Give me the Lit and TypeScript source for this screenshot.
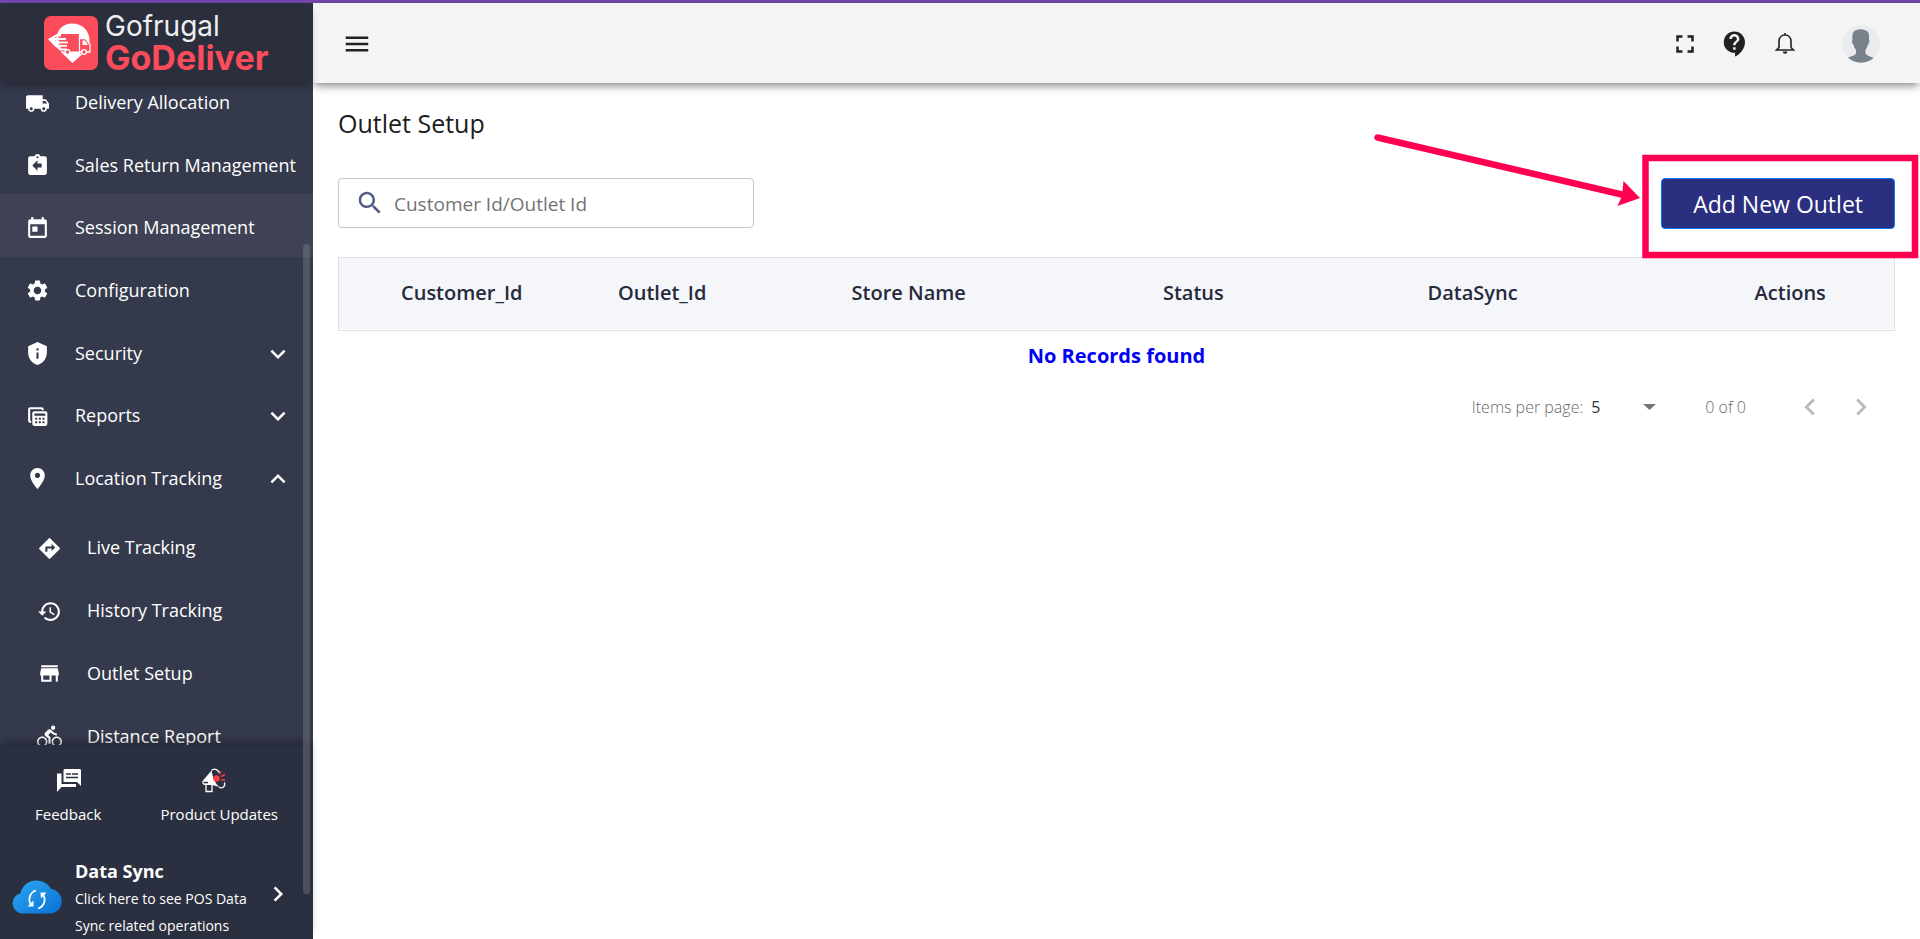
import { LitElement, html, css, svg } from "lit";
import { customElement, state } from "lit/decorators.js";
import { classMap } from "lit/directives/class-map.js";

interface NavItem {
  label: string;
  icon: string;
  active?: boolean;
  expand?: "more" | "less";
}

const ICONS: Record<string, string> = {
  truck:
    "M20 8h-3V4H3c-1.1 0-2 .9-2 2v11h2c0 1.66 1.34 3 3 3s3-1.34 3-3h6c0 1.66 1.34 3 3 3s3-1.34 3-3h2v-5l-3-4zM6 18.5c-.83 0-1.5-.67-1.5-1.5s.67-1.5 1.5-1.5 1.5.67 1.5 1.5-.67 1.5-1.5 1.5zm13.5-9l1.96 2.5H17V9.5h2.5zm-1.5 9c-.83 0-1.5-.67-1.5-1.5s.67-1.5 1.5-1.5 1.5.67 1.5 1.5-.67 1.5-1.5 1.5z",
  salesReturn:
    "M19 3h-4.18C14.4 1.84 13.3 1 12 1c-1.3 0-2.4.84-2.82 2H5c-1.1 0-2 .9-2 2v14c0 1.1.9 2 2 2h14c1.1 0 2-.9 2-2V5c0-1.1-.9-2-2-2zm-7 0c.55 0 1 .45 1 1s-.45 1-1 1-1-.45-1-1 .45-1 1-1zm4 11h-4v3l-5-5 5-5v3h4v4z",
  today:
    "M19 3h-1V1h-2v2H8V1H6v2H5c-1.11 0-1.99.9-1.99 2L3 19c0 1.1.89 2 2 2h14c1.1 0 2-.9 2-2V5c0-1.1-.9-2-2-2zm0 16H5V8h14v11zM7 10h5v5H7z",
  settings:
    "M19.14 12.94c.04-.3.06-.61.06-.94 0-.32-.02-.64-.07-.94l2.03-1.58c.18-.14.23-.41.12-.61l-1.92-3.32c-.12-.22-.37-.29-.59-.22l-2.39.96c-.5-.38-1.03-.7-1.62-.94l-.36-2.54c-.04-.24-.24-.41-.48-.41h-3.84c-.24 0-.43.17-.47.41l-.36 2.54c-.59.24-1.13.57-1.62.94l-2.39-.96c-.22-.08-.47 0-.59.22L2.74 8.87c-.12.21-.08.47.12.61l2.03 1.58c-.05.3-.09.63-.09.94s.02.64.07.94l-2.03 1.58c-.18.14-.23.41-.12.61l1.92 3.32c.12.22.37.29.59.22l2.39-.96c.5.38 1.03.7 1.62.94l.36 2.54c.05.24.24.41.48.41h3.84c.24 0 .44-.17.47-.41l.36-2.54c.59-.24 1.13-.56 1.62-.94l2.39.96c.22.08.47 0 .59-.22l1.92-3.32c.12-.22.07-.47-.12-.61l-2.01-1.58zM12 15.6c-1.98 0-3.6-1.62-3.6-3.6s1.62-3.6 3.6-3.6 3.6 1.62 3.6 3.6-1.62 3.6-3.6 3.6z",
  shield:
    "M12 1L3 5v6c0 5.55 3.84 10.74 9 12 5.16-1.26 9-6.45 9-12V5l-9-4zm-1 6h2v2h-2V7zm0 4h2v6h-2v-6z",
  reports:
    "M5 3C3.9 3 3 3.9 3 5v11c0 1.1.9 2 2 2h1v-2H5V5h11v1h2V5c0-1.1-.9-2-2-2H5zM9 7c-1.1 0-2 .9-2 2v10c0 1.1.9 2 2 2h10.5c1.1 0 2-.9 2-2V9c0-1.1-.9-2-2-2H9zm0 2h10.5v2.2H9V9zm.8 4.2h1.9v1.9H9.8v-1.9zm3.5 0h1.9v1.9h-1.9v-1.9zm3.5 0h1.9v1.9h-1.9v-1.9zm-7 3.4h1.9v1.9H9.8v-1.9zm3.5 0h1.9v1.9h-1.9v-1.9zm3.5 0h1.9v1.9h-1.9v-1.9z",
  place:
    "M12 2C8.13 2 5 5.13 5 9c0 5.25 7 13 7 13s7-7.75 7-13c0-3.87-3.13-7-7-7zm0 9.5c-1.38 0-2.5-1.12-2.5-2.5s1.12-2.5 2.5-2.5 2.5 1.12 2.5 2.5-1.12 2.5-2.5 2.5z",
  directions:
    "M21.71 11.29l-9-9c-.39-.39-1.02-.39-1.41 0l-9 9c-.39.39-.39 1.02 0 1.41l9 9c.39.39 1.02.39 1.41 0l9-9c.39-.38.39-1.01 0-1.41zM14 14.5V12h-4v3H8v-4c0-.55.45-1 1-1h5V7.5l3.5 3.5-3.5 3.5z",
  history:
    "M13 3c-4.97 0-9 4.03-9 9H1l3.89 3.89.07.14L9 12H6c0-3.87 3.13-7 7-7s7 3.13 7 7-3.13 7-7 7c-1.93 0-3.68-.79-4.94-2.06l-1.42 1.42C8.27 19.99 10.51 21 13 21c4.97 0 9-4.03 9-9s-4.03-9-9-9zm-1 5v5l4.28 2.54.72-1.21-3.5-2.08V8H12z",
  store:
    "M20 4H4v2h16V4zm1 10v-2l-1-5H4l-1 5v2h1v6h10v-6h4v6h2v-6h1zm-9 4H6v-4h6v4z",
  bike:
    "M15.5 5.5c1.1 0 2-.9 2-2s-.9-2-2-2-2 .9-2 2 .9 2 2 2zM5 12c-2.8 0-5 2.2-5 5s2.2 5 5 5 5-2.2 5-5-2.2-5-5-5zm0 8.5c-1.9 0-3.5-1.6-3.5-3.5s1.6-3.5 3.5-3.5 3.5 1.6 3.5 3.5-1.6 3.5-3.5 3.5zm5.8-10l2.4-2.4.8.8c1.3 1.3 3 2.1 5.1 2.1V9c-1.5 0-2.7-.6-3.6-1.5l-1.9-1.9c-.5-.4-1-.6-1.6-.6s-1.1.2-1.4.6L7.8 8.4c-.4.4-.6.9-.6 1.4 0 .6.2 1.1.6 1.4L11 14v5h2v-6.2l-2.2-2.3zM19 12c-2.8 0-5 2.2-5 5s2.2 5 5 5 5-2.2 5-5-2.2-5-5-5zm0 8.5c-1.9 0-3.5-1.6-3.5-3.5s1.6-3.5 3.5-3.5 3.5 1.6 3.5 3.5-1.6 3.5-3.5 3.5z",
  more: "M16.59 8.59L12 13.17 7.41 8.59 6 10l6 6 6-6z",
  less: "M12 8l-6 6 1.41 1.41L12 10.83l4.59 4.58L18 14z",
  left: "M15.41 7.41L14 6l-6 6 6 6 1.41-1.41L10.83 12z",
  right: "M10 6L8.59 7.41 13.17 12l-4.58 4.59L10 18l6-6z",
  menu: "M3 18h18v-2H3v2zm0-5h18v-2H3v2zm0-7v2h18V6H3z",
  fullscreen:
    "M7 14H5v5h5v-2H7v-3zm-2-4h2V7h3V5H5v5zm12 7h-3v2h5v-5h-2v3zM14 5v2h3v3h2V5h-5z",
  support:
    "M11.5 2C6.81 2 3 5.81 3 10.5S6.81 19 11.5 19h.5v3c4.86-2.34 8-7 8-11.5C20 5.81 16.19 2 11.5 2zm1 14.5h-2v-2h2v2zm0-3.5h-2c0-3.25 3-3 3-5 0-1.1-.9-2-2-2s-2 .9-2 2h-2c0-2.21 1.79-4 4-4s4 1.79 4 4c0 2.5-3 2.75-3 5z",
  search:
    "M15.5 14h-.79l-.28-.27C15.41 12.59 16 11.11 16 9.5 16 5.91 13.09 3 9.5 3S3 5.91 3 9.5 5.91 16 9.5 16c1.61 0 3.09-.59 4.23-1.57l.27.28v.79l5 4.99L20.49 19l-4.99-5zm-6 0C7.01 14 5 11.99 5 9.5S7.01 5 9.5 5 14 7.01 14 9.5 11.99 14 9.5 14z",
};

const icon = (name: string, cls = "icon") =>
  html`<svg class=${cls} viewBox="0 0 24 24" aria-hidden="true">
    ${svg`<path fill="currentColor" fill-rule="evenodd" d=${ICONS[name]} />`}
  </svg>`;

const NAV: NavItem[] = [
  { label: "Delivery Allocation", icon: "truck" },
  { label: "Sales Return Management", icon: "salesReturn" },
  { label: "Session Management", icon: "today", active: true },
  { label: "Configuration", icon: "settings" },
  { label: "Security", icon: "shield", expand: "more" },
  { label: "Reports", icon: "reports", expand: "more" },
  { label: "Location Tracking", icon: "place", expand: "less" },
];

const SUB_NAV: NavItem[] = [
  { label: "Live Tracking", icon: "directions" },
  { label: "History Tracking", icon: "history" },
  { label: "Outlet Setup", icon: "store" },
  { label: "Distance Report", icon: "bike" },
];

@customElement("app-sidebar")
export class AppSidebar extends LitElement {
  static styles = css`
    :host {
      position: relative;
      display: flex;
      flex-direction: column;
      min-height: 0;
      background: #34394b;
      color: #fff;
    }
    * {
      box-sizing: border-box;
    }
    a,
    button {
      color: inherit;
      font: inherit;
      text-decoration: none;
    }
    .brand {
      display: flex;
      align-items: center;
      gap: 7px;
      height: 80px;
      flex: none;
      padding-left: 44px;
      background: #2b2e3c;
      box-shadow: 0 5px 8px -3px rgba(0, 0, 0, 0.4);
      z-index: 1;
    }
    .mark {
      width: 54px;
      height: 54px;
    }
    .name {
      font-family: Inter, sans-serif;
      display: flex;
      flex-direction: column;
    }
    .name .top {
      font-size: 28px;
      line-height: 30px;
      color: #eeeff1;
    }
    .name .product {
      font-size: 34px;
      line-height: 34px;
      font-weight: 700;
      color: #fb4c5c;
    }
    .scroller {
      flex: 1;
      min-height: 0;
      overflow: hidden;
    }
    .list {
      list-style: none;
      margin: 0;
      padding: 0;
      display: grid;
      grid-template-columns: minmax(0, 1fr);
      grid-auto-rows: 1fr;
    }
    .main {
      margin-top: -14px;
      height: 438px;
    }
    .sub {
      margin-top: 7px;
      height: 251px;
    }
    .item {
      display: flex;
      align-items: center;
      gap: 25px;
      width: 100%;
      height: 100%;
      padding: 6px 20px 0 25px;
      border: 0;
      background: none;
      text-align: left;
      font-size: 18px;
      line-height: 26px;
      white-space: nowrap;
      cursor: pointer;
    }
    .item span {
      padding-bottom: 2px;
    }
    .sub .item {
      padding-left: 37px;
    }
    .item.active {
      background: #3e4254;
    }
    .icon {
      width: 25px;
      height: 25px;
      flex: none;
    }
    .chevron {
      width: 30px;
      height: 30px;
      flex: none;
      margin-left: auto;
    }
    .thumb {
      position: absolute;
      top: 241px;
      right: 3px;
      bottom: 45px;
      width: 7px;
      border-radius: 4px;
      background: rgba(140, 140, 145, 0.35);
      z-index: 2;
    }
    .foot {
      flex: none;
      background: #2b3040;
      box-shadow: 0 -5px 8px -3px rgba(0, 0, 0, 0.4);
      z-index: 1;
    }
    .links {
      display: flex;
      padding: 21px 35px 0 35px;
      justify-content: space-between;
      font-size: 15px;
      line-height: 24px;
    }
    .link {
      display: flex;
      flex-direction: column;
      align-items: center;
      gap: 8px;
    }
    .glyph {
      width: 28px;
      height: 28px;
    }
    .updates .glyph {
      margin-right: 12px;
    }
    .sync {
      display: flex;
      align-items: center;
      gap: 13px;
      padding: 32px 20px 0 12px;
    }
    .cloud {
      width: 50px;
      height: 34px;
      flex: none;
      margin-bottom: 4px;
    }
    .sync .chevron {
      margin-bottom: 10px;
    }
    .sync-text {
      display: flex;
      flex-direction: column;
      font-size: 14px;
      line-height: 27px;
      white-space: nowrap;
    }
    .sync-title {
      font-size: 18px;
      font-weight: 700;
    }
  `;

  private row(item: NavItem) {
    const cls = classMap({ item: true, active: !!item.active });
    const body = html`${icon(item.icon)}<span>${item.label}</span>`;
    return html`<li>
      ${item.expand
        ? html`<button class=${cls} type="button" aria-expanded=${item.expand === "less"}>
            ${body}${icon(item.expand, "chevron")}
          </button>`
        : html`<a class=${cls} href="#">${body}</a>`}
    </li>`;
  }

  render() {
    return html`
      <div class="brand">
        <svg class="mark" viewBox="0 0 54 54" aria-hidden="true">
          <rect width="54" height="54" rx="7" fill="#fb4c5c" />
          <path d="M28 7.5c10 0 17.5 7 17.5 17 0 5-3 9.5-7 13.5L28.5 47 19 38c-4-4-7-8-7-13.5 0-10 7-17 16-17z" fill="#fff" />
          <path d="M14 18h21.5v18H16z" fill="#fb4c5c" />
          <path d="M36 22.5h5.5l5 6.5v8.5H36z" fill="#fb4c5c" />
          <path d="M38.5 24.5h2.5l3 4.5h-5.5z" fill="#fff" />
          <path d="M4 23l9-5h4v2.500h-4.500l-2 1.500H22v2H11l1.500 1.500H24v2H13.500L15 29h8v1.800h-7l1.500 1.700H23v2h-7L9.500 29z" fill="#fff" />
          <path d="M17 36h18.500M35.500 18v18" stroke="#fff" stroke-width="1.2" fill="none" />
          <circle cx="23.5" cy="36" r="2.3" fill="#fb4c5c" stroke="#fff" stroke-width="1.3" />
          <circle cx="40" cy="36" r="2.3" fill="#fb4c5c" stroke="#fff" stroke-width="1.3" />
          <path d="M36 36h2M42.5 36H46v-7.500l-4.500-6H36" stroke="#fff" stroke-width="1.3" fill="none" />
        </svg>
        <div class="name"><span class="top">Gofrugal</span><span class="product">GoDeliver</span></div>
      </div>
      <nav class="scroller" aria-label="Main">
        <ul class="list main">${NAV.map((i) => this.row(i))}</ul>
        <ul class="list sub">${SUB_NAV.map((i) => this.row(i))}</ul>
      </nav>
      <div class="thumb"></div>
      <div class="foot">
        <div class="links">
          <a class="link" href="#">
            <svg class="glyph" viewBox="0 0 28 28" aria-hidden="true">
              <path fill="#fff" d="M11 3h14.500c1 0 1.500.5 1.500 1.500V20l-4-4H9.500V4.500C9.500 3.500 10 3 11 3zM3 7.500h4.500V18H22v3H7.500L3 26z" />
              <path d="M12 8h5M18 8h6M12 11.500h12" stroke="#2b3040" stroke-width="1.5" />
            </svg>
            Feedback
          </a>
          <a class="link updates" href="#">
            <svg class="glyph" viewBox="0 0 28 28" aria-hidden="true">
              <path fill="#fff" d="M12.500 4.500L4 14.500c-1.500 2-.5 4 1.500 4.500h8l6.500 2c-4-4-6.500-10-7.500-16.500z" />
              <path d="M12.500 4.500c3-3 7-.5 8.500 3M20 21c3 2 6.500 0 5.500-4.500M7 19v6.500h6V19" fill="none" stroke="#fff" stroke-width="1.3" />
              <path d="M4.500 15.800h4.500v1.500H4.500z" fill="#2b3040" />
              <circle cx="17.5" cy="12.5" r="3.2" fill="#fb3b3b" />
              <path d="M20.500 7.500l1.500-2.500M22 10.500l4-2M22 14h4" stroke="#fb3b3b" stroke-width="1.4" />
            </svg>
            Product Updates
          </a>
        </div>
        <a class="sync" href="#">
          <svg class="cloud" viewBox="0 0 50 34" aria-hidden="true">
            <defs>
              <linearGradient id="sky" x1="0" y1="0" x2="1" y2="1">
                <stop offset="0" stop-color="#2fa9f5" />
                <stop offset="1" stop-color="#0670d2" />
              </linearGradient>
            </defs>
            <path fill="url(#sky)" d="M10.500 33.500A10.300 10.300 0 0 1 8.500 13.200C10 6 16.500.5 24.500.5c6.500 0 12 3.500 14.500 8.500a12.300 12.300 0 0 1-1 24.500z" />
            <path d="M24 10.500a8.500 9 0 0 0-5 14M26 28.500a8.500 9 0 0 0 5-14" fill="none" stroke="#fff" stroke-width="1.8" />
            <path d="M15.500 26.500h6v-6zM28.500 12.500h6l-5.500 6z" fill="#fff" />
          </svg>
          <span class="sync-text">
            <span class="sync-title">Data Sync</span>
            <span>Click here to see POS Data</span>
            <span>Sync related operations</span>
          </span>
          ${icon("right", "chevron")}
        </a>
      </div>
    `;
  }
}

@customElement("app-topbar")
export class AppTopbar extends LitElement {
  static styles = css`
    :host {
      display: flex;
      align-items: center;
      gap: 20px;
      box-sizing: border-box;
      height: 80px;
      padding: 2px 40px 0 29px;
      background: #f4f4f4;
      color: #212121;
      box-shadow: 0 5px 8px -2px rgba(0, 0, 0, 0.45);
    }
    button {
      display: flex;
      padding: 0;
      border: 0;
      background: none;
      color: inherit;
      cursor: pointer;
    }
    .icon {
      width: 30px;
      height: 30px;
    }
    .space {
      flex: 1;
    }
    .avatar {
      width: 38px;
      height: 38px;
      margin-left: 22px;
    }
  `;

  render() {
    return html`
      <button type="button" aria-label="Toggle menu">${icon("menu")}</button>
      <span class="space"></span>
      <button type="button" aria-label="Full screen">${icon("fullscreen")}</button>
      <button type="button" aria-label="Help">${icon("support")}</button>
      <button type="button" aria-label="Notifications">
        <svg class="icon" viewBox="0 0 30 30" aria-hidden="true">
          <path d="M9 18.500v-6c0-4 2.500-6.500 6-6.500s6 2.500 6 6.500v6l2.500 2.500H6.500zM15 6V4" fill="none" stroke="#212121" stroke-width="1.6" />
          <path d="M12.800 22.500h4.600a2.300 2.300 0 0 1-4.600 0z" fill="#212121" />
        </svg>
      </button>
      <button class="avatar" type="button" aria-label="Account">
        <svg viewBox="0 0 38 38" aria-hidden="true">
          <defs><clipPath id="round"><circle cx="19" cy="19" r="18.8" /></clipPath></defs>
          <g clip-path="url(#round)">
            <rect width="38" height="38" fill="#e9ebee" />
            <path fill="#79818a" d="M11 8c2-5 13-5 15.500 0 .8 2 .6 4 .4 6.500.9.8.5 4-1 5-.6 2.500-1.400 4-2.400 5.500v3.500c1 2 5 3 8.500 4.500V40H5v-7c3.500-1.500 8-2.500 9-4.500V25c-1.200-1.500-2-3-2.500-5.500-1.500-1-1.900-4-1-5C10.300 12 10.200 10 11 8z" />
          </g>
        </svg>
      </button>
    `;
  }
}

@customElement("outlet-setup")
export class OutletSetup extends LitElement {
  @state() private query = "";

  private columns = [
    { label: "Customer_Id", width: 14 },
    { label: "Outlet_Id", width: 15 },
    { label: "Store Name", width: 20 },
    { label: "Status", width: 17 },
    { label: "DataSync", width: 21 },
    { label: "Actions", width: 13 },
  ];

  static styles = css`
    :host {
      display: block;
      padding: 24px 25px;
      color: #1c1c1c;
    }
    * {
      box-sizing: border-box;
    }
    h1 {
      margin: 0 0 39px;
      font-size: 25px;
      line-height: 32px;
      font-weight: 400;
    }
    .toolbar {
      display: flex;
      justify-content: space-between;
      gap: 24px;
      margin-bottom: 28px;
    }
    .search {
      display: flex;
      align-items: center;
      gap: 9px;
      width: 416px;
      height: 50px;
      padding: 0 16px;
      border: 1px solid #c6c6c8;
      border-radius: 4px;
      color: #535c86;
    }
    .search .icon {
      width: 30px;
      height: 30px;
      flex: none;
    }
    .search input {
      flex: 1;
      min-width: 0;
      height: 46px;
      padding: 2px 0 0;
      border: 0;
      outline: 0;
      background: none;
      font: inherit;
      font-size: 19px;
      color: #333;
    }
    .search input::placeholder {
      color: #737373;
      opacity: 1;
    }
    .callout {
      position: relative;
    }
    .add {
      height: 51px;
      padding: 0 31px;
      border: 1px solid #007bff;
      border-radius: 4px;
      background: #2b2f7f;
      color: #fff;
      font: inherit;
      font-size: 23px;
      line-height: 32px;
      cursor: pointer;
    }
    .pointer {
      position: absolute;
      right: -25px;
      top: -48px;
      width: 550px;
      height: 135px;
      pointer-events: none;
    }
    table {
      width: 100%;
      table-layout: fixed;
      border-collapse: separate;
      border-spacing: 0;
    }
    th {
      height: 74px;
      padding: 0 0 3px 62px;
      border: solid #dfe0e2;
      border-width: 1px 0;
      background: #f4f6fa;
      box-shadow: inset 0 -1px #fff;
      color: #262a3b;
      font-size: 20px;
      font-weight: 600;
      text-align: left;
      white-space: nowrap;
    }
    th:first-child {
      border-left-width: 1px;
    }
    th:last-child {
      border-right-width: 1px;
    }
    .empty {
      height: 48px;
      padding: 0;
      color: #0000f5;
      font-size: 20px;
      font-weight: 700;
      text-align: center;
    }
    .pager {
      display: flex;
      align-items: center;
      justify-content: flex-end;
      height: 55px;
      padding-right: 17px;
      font-size: 16px;
      font-weight: 300;
      color: #6a6a6a;
    }
    .size {
      position: relative;
      display: flex;
      align-items: center;
      margin: 0 48px 0 8px;
    }
    select {
      appearance: none;
      width: 66px;
      height: 28px;
      padding: 0;
      border: 0;
      background: none;
      font: inherit;
      font-weight: 400;
      color: #333;
    }
    .caret {
      position: absolute;
      right: 1px;
      width: 13px;
      height: 6px;
      pointer-events: none;
    }
    .range {
      margin-right: 47px;
    }
    .pager button {
      display: flex;
      padding: 0;
      border: 0;
      background: none;
      color: #b9b9b9;
    }
    .pager button + button {
      margin-left: 17px;
    }
    .step {
      width: 34px;
      height: 34px;
    }
  `;

  render() {
    return html`
      <h1>Outlet Setup</h1>
      <div class="toolbar">
        <label class="search">
          ${icon("search")}
          <input
            type="text"
            aria-label="Customer Id/Outlet Id"
            placeholder="Customer Id/Outlet Id"
            .value=${this.query}
            @input=${(e: InputEvent) => (this.query = (e.target as HTMLInputElement).value)}
          />
        </label>
        <div class="callout">
          <button class="add" type="button">Add New Outlet</button>
          <svg class="pointer" viewBox="0 0 550 135" aria-hidden="true">
            <rect x="275.5" y="28" width="269.5" height="97" fill="none" stroke="#ff0050" stroke-width="6.5" />
            <path d="M7.500 7.500L254 65" stroke="#ff0050" stroke-width="6.5" stroke-linecap="round" />
            <path d="M253.500 51L270 68 247.500 76 252 66z" fill="#ff0050" />
          </svg>
        </div>
      </div>
      <table>
        <colgroup>
          ${this.columns.map((c) => html`<col style="width:${c.width}%" />`)}
        </colgroup>
        <thead>
          <tr>${this.columns.map((c) => html`<th scope="col">${c.label}</th>`)}</tr>
        </thead>
        <tbody>
          <tr><td class="empty" colspan=${this.columns.length}>No Records found</td></tr>
        </tbody>
      </table>
      <div class="pager">
        <label for="page-size">Items per page:</label>
        <span class="size">
          <select id="page-size">
            <option>5</option>
            <option>10</option>
            <option>25</option>
          </select>
          <svg class="caret" viewBox="0 0 13 6" aria-hidden="true"><path d="M0 0h13L6.500 6z" fill="#757575" /></svg>
        </span>
        <span class="range">0 of 0</span>
        <button type="button" aria-label="Previous page" disabled>${icon("left", "step")}</button>
        <button type="button" aria-label="Next page" disabled>${icon("right", "step")}</button>
      </div>
    `;
  }
}

@customElement("app-root")
export class AppRoot extends LitElement {
  static styles = css`
    :host {
      display: grid;
      grid-template-columns: 313px minmax(0, 1fr);
      grid-template-rows: minmax(0, 1fr);
      box-sizing: border-box;
      height: 100vh;
      border-top: 3px solid #7145a6;
      background: #fff;
      font-family: "Open Sans", "Noto Sans", sans-serif;
    }
    .page {
      min-width: 0;
      overflow: hidden;
    }
  `;

  render() {
    return html`
      <app-sidebar></app-sidebar>
      <main class="page">
        <app-topbar></app-topbar>
        <outlet-setup></outlet-setup>
      </main>
    `;
  }
}
